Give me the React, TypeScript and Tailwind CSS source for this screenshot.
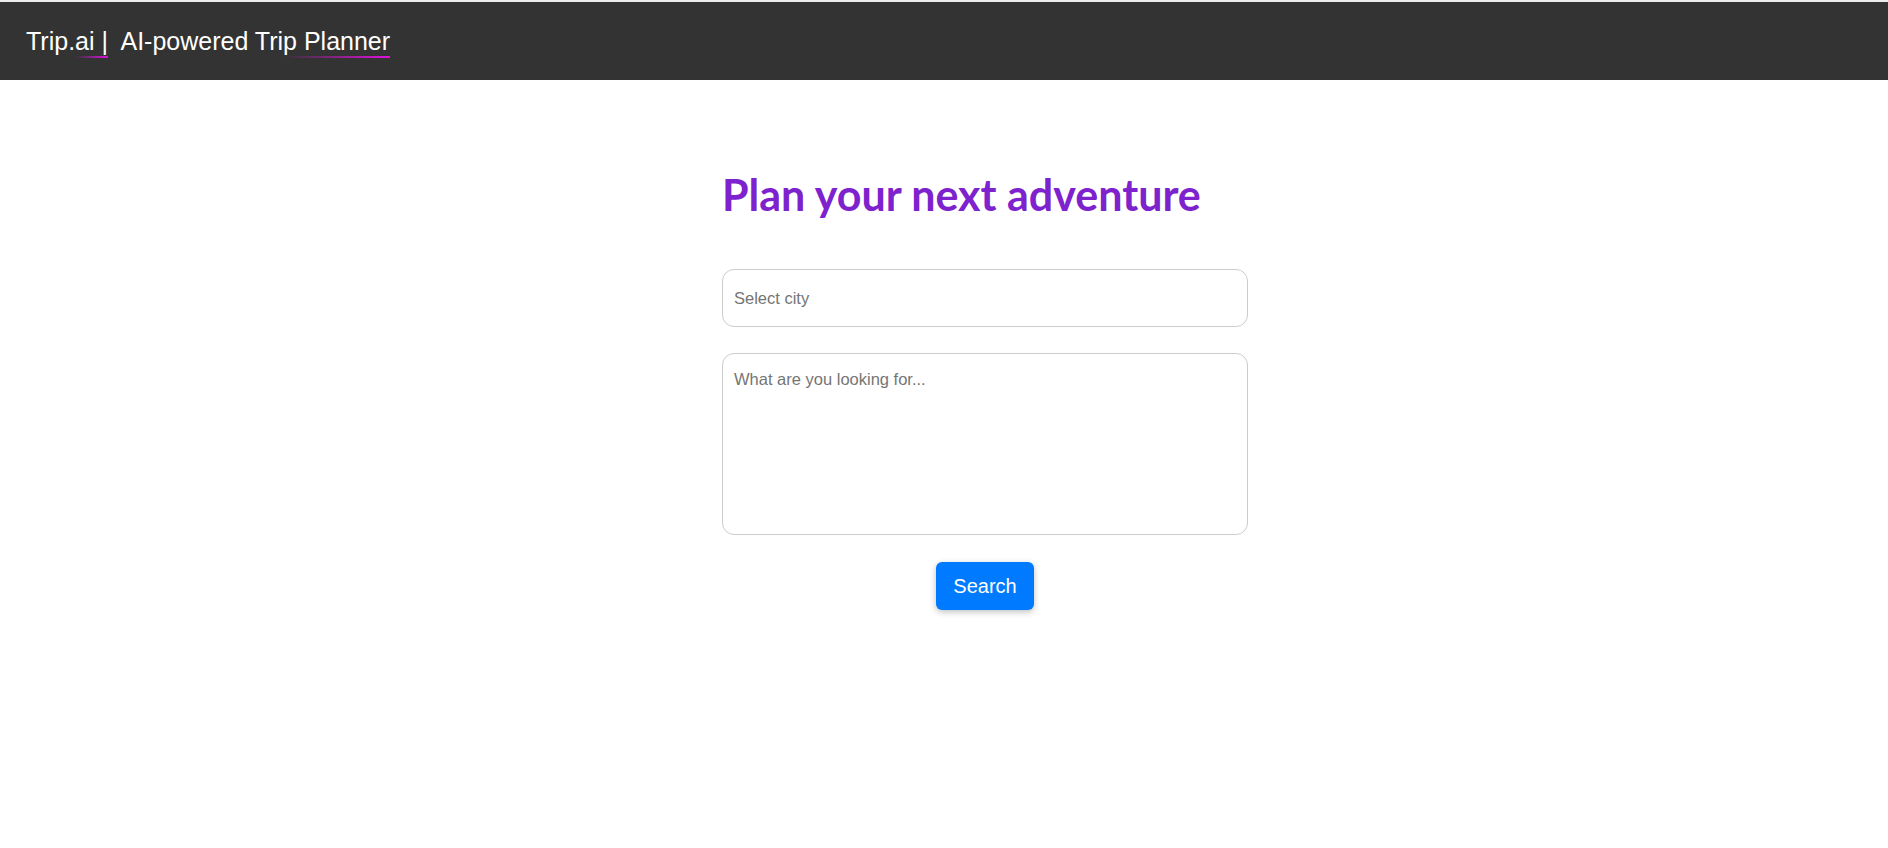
export default function App() {
  return (
    <div className="min-h-screen w-full bg-white font-['Liberation_Sans',Arial,sans-serif]">
      <div className="h-[2px] w-full bg-[#ececec]" />
      {/* top bar */}
      <header className="flex h-[78px] w-full items-center bg-[#333333] px-[26px]">
        <div className="whitespace-pre text-[25px] leading-none text-white">
          Trip.
          <span className="bg-linear-to-r from-transparent to-[#e010e0] bg-[length:100%_2px] bg-bottom bg-no-repeat pb-[3px]">
            ai |
          </span>
          {"  AI-powered Tri"}
          <span className="bg-linear-to-r from-transparent to-[#e010e0] bg-[length:100%_2px] bg-bottom bg-no-repeat pb-[3px]">
            p Planner
          </span>
        </div>
      </header>

      <main className="flex justify-center pl-[82px] pt-[88px]">
        <div className="flex w-[526px] flex-col">
          <h1 className="font-['Lato',sans-serif] text-[43px] font-bold leading-[54px] text-[#7e22ce]">
            Plan your next adventure
          </h1>

          <form className="mt-[47px] flex flex-col">
            <input
              type="text"
              placeholder="Select city"
              className="h-[58px] w-full rounded-[12px] border border-[#cccccc] px-[11px] text-[16.5px] text-[#333] outline-none placeholder:text-[#757575]"
            />
            <textarea
              placeholder="What are you looking for..."
              className="mt-[26px] h-[182px] w-full resize-none rounded-[12px] border border-[#cccccc] px-[11px] py-[15px] text-[16.5px] leading-[20px] text-[#333] outline-none placeholder:text-[#757575]"
            />
            <div className="mt-[27px] flex justify-center">
              <button
                type="button"
                className="h-[48px] w-[98px] rounded-[6px] bg-[#007bff] text-[20px] text-white shadow-[0_2px_6px_rgba(0,0,0,0.25)]"
              >
                Search
              </button>
            </div>
          </form>
        </div>
      </main>
    </div>
  );
}
